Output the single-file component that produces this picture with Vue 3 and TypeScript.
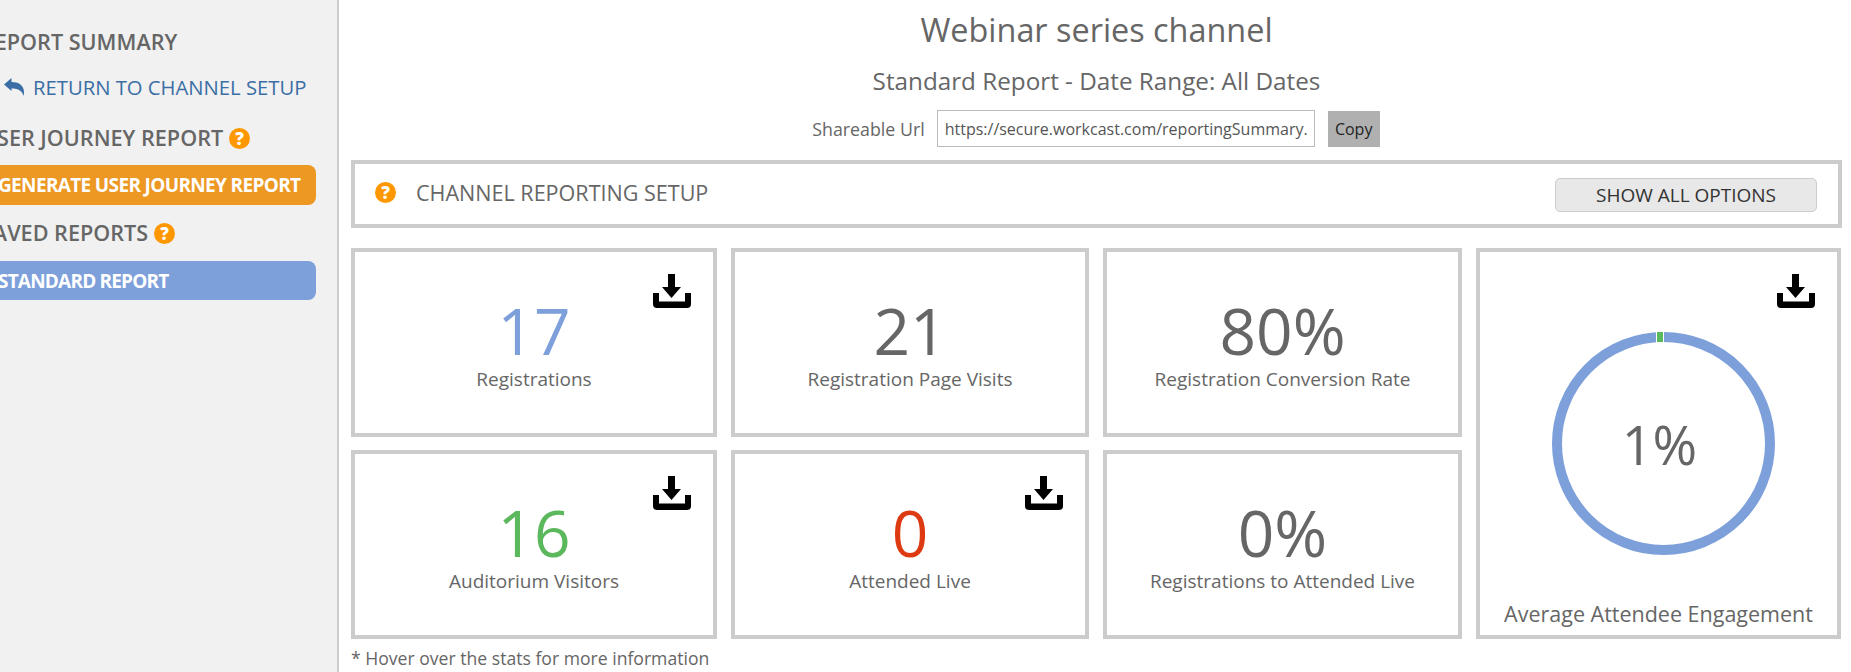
<script setup lang="ts">
interface Stat {
  value: string;
  label: string;
  tone?: string;
  download?: boolean;
}

const stats: Stat[] = [
  { value: "17", label: "Registrations", tone: "blue", download: true },
  { value: "21", label: "Registration Page Visits" },
  { value: "80%", label: "Registration Conversion Rate" },
  { value: "16", label: "Auditorium Visitors", tone: "green", download: true },
  { value: "0", label: "Attended Live", tone: "red", download: true },
  { value: "0%", label: "Registrations to Attended Live" },
];

const downloadPath = "M15 0h7v13h6l-9.5 11L9 13h6zM0 19h6v8.5h26V19h6v11a4 4 0 0 1-4 4H4a4 4 0 0 1-4-4z";
</script>

<template>
  <div class="page">
    <aside class="sidebar">
      <h3 class="side-title first">REPORT SUMMARY</h3>
      <a class="return-link">
        <svg class="reply" viewBox="0 0 20 18" aria-hidden="true">
          <path d="M0 6.5 7.5 0v4C14.5 4 20 7 20 14.5c0 1.3-.2 2.4-.6 3.5-.9-4.8-4.8-7.4-11.9-7.4V13z" />
        </svg>
        RETURN TO CHANNEL SETUP
      </a>
      <h3 class="side-title">USER JOURNEY REPORT <span class="help">?</span></h3>
      <button type="button" class="side-btn orange">GENERATE USER JOURNEY REPORT</button>
      <h3 class="side-title">SAVED REPORTS <span class="help">?</span></h3>
      <button type="button" class="side-btn saved">STANDARD REPORT</button>
    </aside>

    <main class="main">
      <h1>Webinar series channel</h1>
      <h2>Standard Report - Date Range: All Dates</h2>
      <div class="share">
        <span>Shareable Url</span>
        <input value="https://secure.workcast.com/reportingSummary.aspx" readonly />
        <button type="button" class="copy">Copy</button>
      </div>

      <section class="setup">
        <span class="help">?</span>
        <span class="setup-title">CHANNEL REPORTING SETUP</span>
        <button type="button" class="show-all">SHOW ALL OPTIONS</button>
      </section>

      <div class="grid">
        <div v-for="stat in stats" :key="stat.label" class="card">
          <svg v-if="stat.download" class="download" viewBox="0 0 38 34" aria-hidden="true">
            <path :d="downloadPath" />
          </svg>
          <div class="value" :class="stat.tone">{{ stat.value }}</div>
          <div class="label">{{ stat.label }}</div>
        </div>

        <div class="card engagement">
          <svg class="download" viewBox="0 0 38 34" aria-hidden="true">
            <path :d="downloadPath" />
          </svg>
          <div class="ring">
            <svg viewBox="0 0 223 223" aria-hidden="true">
              <circle cx="111.5" cy="111.5" r="106.5" fill="none" stroke="#7da0db" stroke-width="10" />
              <rect x="104" y="0" width="8" height="11" fill="#fff" />
              <rect x="105" y="0" width="6" height="10" fill="#5cb85c" />
            </svg>
            <span>1%</span>
          </div>
          <div class="label">Average Attendee Engagement</div>
        </div>
      </div>

      <p class="note">* Hover over the stats for more information</p>
    </main>
  </div>
</template>

<style>
html,
body {
  margin: 0;
  background: #fff;
}
</style>

<style scoped>
.page {
  display: flex;
  width: 1851px;
  height: 672px;
  overflow: hidden;
  font-family: "Open Sans", "Noto Sans", sans-serif;
  color: #666;
}

.sidebar {
  flex: none;
  box-sizing: border-box;
  width: 339px;
  padding: 27px 21px 0 0;
  background: #f1f1f1;
  border-right: 2px solid #ccc;
  overflow: hidden;
}

.side-title {
  display: flex;
  align-items: center;
  margin: 0 0 0 -19px;
  font-size: 21.6px;
  font-weight: 600;
  line-height: 30px;
  white-space: nowrap;
}

.side-title .help {
  margin-left: 6px;
}

.return-link {
  display: flex;
  align-items: center;
  height: 30px;
  margin-top: 15px;
  color: #3a6ea5;
  font-size: 20.25px;
  white-space: nowrap;
}

.reply {
  width: 20px;
  height: 18px;
  margin: 0 9px 0 4px;
  fill: #3a6ea5;
}

.return-link + .side-title {
  margin-top: 21px;
}

.side-btn {
  display: block;
  box-sizing: border-box;
  width: 336px;
  margin-left: -20px;
  padding-left: 18px;
  border: 0;
  border-radius: 8px;
  color: #fff;
  font: 700 19px "Open Sans", sans-serif;
  letter-spacing: -0.65px;
  text-align: left;
  white-space: nowrap;
}

.orange {
  height: 40px;
  margin-top: 12px;
  margin-bottom: 13px;
  background: #ec9823;
}

.saved {
  height: 39px;
  margin-top: 13px;
  background: #7da0db;
  letter-spacing: -0.8px;
}

.help {
  flex: none;
  display: inline-block;
  width: 21px;
  height: 21px;
  border-radius: 50%;
  background: #ff9800;
  color: #fff;
  font-size: 17px;
  font-weight: 800;
  line-height: 21px;
  text-align: center;
}

.main {
  flex: 1;
  min-width: 0;
  padding: 0 9px 0 12px;
}

h1 {
  margin: 7px 0 0;
  font-size: 32.4px;
  font-weight: 400;
  line-height: 44px;
  text-align: center;
}

h2 {
  margin: 14px 0 0;
  font-size: 24.25px;
  font-weight: 400;
  line-height: 32px;
  text-align: center;
}

.share {
  display: flex;
  justify-content: center;
  align-items: center;
  height: 37px;
  margin-top: 13px;
  padding-right: 1px;
  font-size: 17.8px;
}

.share input {
  box-sizing: border-box;
  width: 378px;
  height: 37px;
  margin-left: 12px;
  padding: 0 7px;
  border: 1px solid #bbb;
  color: #555;
  font: 16px "Open Sans", sans-serif;
}

.copy {
  width: 52px;
  height: 36px;
  margin-left: 13px;
  border: 0;
  background: #b0b0b0;
  color: #222;
  font: 16px "Open Sans", sans-serif;
}

.setup {
  box-sizing: border-box;
  display: flex;
  align-items: center;
  height: 68px;
  margin-top: 13px;
  padding: 0 21px 0 20px;
  border: 4px solid #ccc;
}

.setup .help {
  margin-top: -4px;
}

.setup-title {
  margin: -3px 0 0 20px;
  font-size: 21.55px;
}

.show-all {
  width: 262px;
  height: 34px;
  margin: 1px 0 0 auto;
  border: 1px solid #ccc;
  border-radius: 5px;
  background: #e8e8e8;
  color: #333;
  font: 19px "Open Sans", sans-serif;
}

.grid {
  display: grid;
  grid-template-columns: 366px 358px 359px 365px;
  grid-template-rows: 189px 189px;
  gap: 13px 14px;
  margin-top: 20px;
}

.card {
  position: relative;
  box-sizing: border-box;
  border: 4px solid #ccc;
  text-align: center;
}

.value {
  margin-top: 43px;
  font-size: 64px;
  font-weight: 400;
  line-height: 71px;
}

.value.blue {
  color: #7da0db;
}

.value.green {
  color: #5cb85c;
}

.value.red {
  color: #de3a12;
}

.label {
  font-size: 19px;
  line-height: 26px;
}

.download {
  position: absolute;
  top: 22px;
  right: 22px;
  width: 38px;
  height: 34px;
}

.engagement {
  grid-column: 4;
  grid-row: 1 / span 2;
}

.ring {
  position: relative;
  width: 223px;
  height: 223px;
  margin: 80px 0 0 72px;
}

.ring svg {
  display: block;
  width: 223px;
  height: 223px;
}

.ring span {
  position: absolute;
  inset: 0;
  display: flex;
  align-items: center;
  justify-content: center;
  padding-right: 8px;
  font-size: 54px;
  font-weight: 400;
}

.engagement .label {
  margin-top: 46px;
  font-size: 21.5px;
}

.note {
  margin: 7px 0 0;
  font-size: 17.6px;
  line-height: 24px;
}
</style>
